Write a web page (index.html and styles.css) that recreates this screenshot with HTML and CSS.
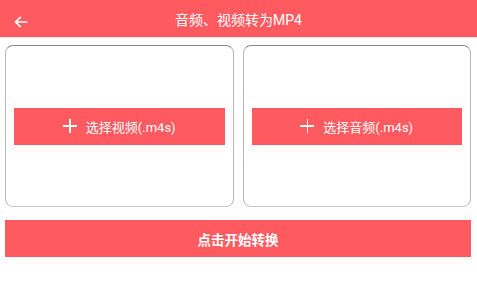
FILE: index.html
```html
<!DOCTYPE html>
<html lang="zh">
<head>
<meta charset="utf-8">
<link rel="stylesheet" href="styles.css">
</head>
<body>
<header class="bar">
  <span class="back">
    <svg width="14" height="12" viewBox="0 0 14 12"><path d="M13.5 6H1.5M6.8 0.8L1.5 6l5.3 5.2" fill="none" stroke="#fff" stroke-width="1.7"/></svg>
  </span>
  <h1 class="title">音频、视频转为MP4</h1>
</header>
<main class="content">
  <div class="cards">
    <div class="card">
      <button class="pick"><span class="plus"></span>选择视频(.m4s)</button>
    </div>
    <div class="card">
      <button class="pick"><span class="plus"></span>选择音频(.m4s)</button>
    </div>
  </div>
  <button class="start">点击开始转换</button>
</main>
</body>
</html>
```
FILE: styles.css
```css
* { box-sizing: border-box; }
body {
  margin: 0;
  background: #fff;
  font-family: Roboto, "Noto Sans CJK SC", sans-serif;
}
.bar {
  position: relative;
  height: 38px;
  background: #ff5a5f;
  border-bottom: 1px solid #e6e6e6;
  display: flex;
  align-items: center;
  justify-content: center;
  padding-top: 3px;
}
.back {
  position: absolute;
  left: 14px;
  top: 16px;
  width: 14px;
  height: 12px;
  display: flex;
}
.title {
  margin: 0;
  color: #fff;
  font-size: 14px;
  font-weight: normal;
  line-height: 20px;
}
.content {
  padding: 7px 6px 0 5px;
}
.cards {
  display: flex;
  gap: 9px;
}
.card {
  flex: 1;
  height: 162px;
  border: 1px solid #b8b8b8;
  border-top-color: #8a8a8a;
  border-bottom-color: #c8c8c8;
  border-radius: 8px;
  padding: 0 8px;
  display: flex;
  align-items: center;
}
.pick {
  width: 100%;
  height: 37px;
  border: 0;
  background: #ff5a5f;
  color: #fff;
  font-family: Roboto, "Noto Sans CJK SC", sans-serif;
  font-size: 13px;
  display: flex;
  align-items: center;
  justify-content: center;
  padding: 0;
}
.plus {
  position: relative;
  width: 14px;
  height: 14px;
  margin-right: 9px;
}
.plus::before, .plus::after {
  content: "";
  position: absolute;
  background: #fff;
}
.plus::before { left: 0; right: 0; top: 6.3px; height: 1.4px; }
.plus::after { top: 0; bottom: 0; left: 6.3px; width: 1.4px; }
.start {
  display: block;
  width: 100%;
  height: 37px;
  margin-top: 13px;
  border: 0;
  background: #ff5a5f;
  color: #fff;
  font-family: Roboto, "Noto Sans CJK SC", sans-serif;
  font-size: 13.5px;
  font-weight: bold;
}
```
